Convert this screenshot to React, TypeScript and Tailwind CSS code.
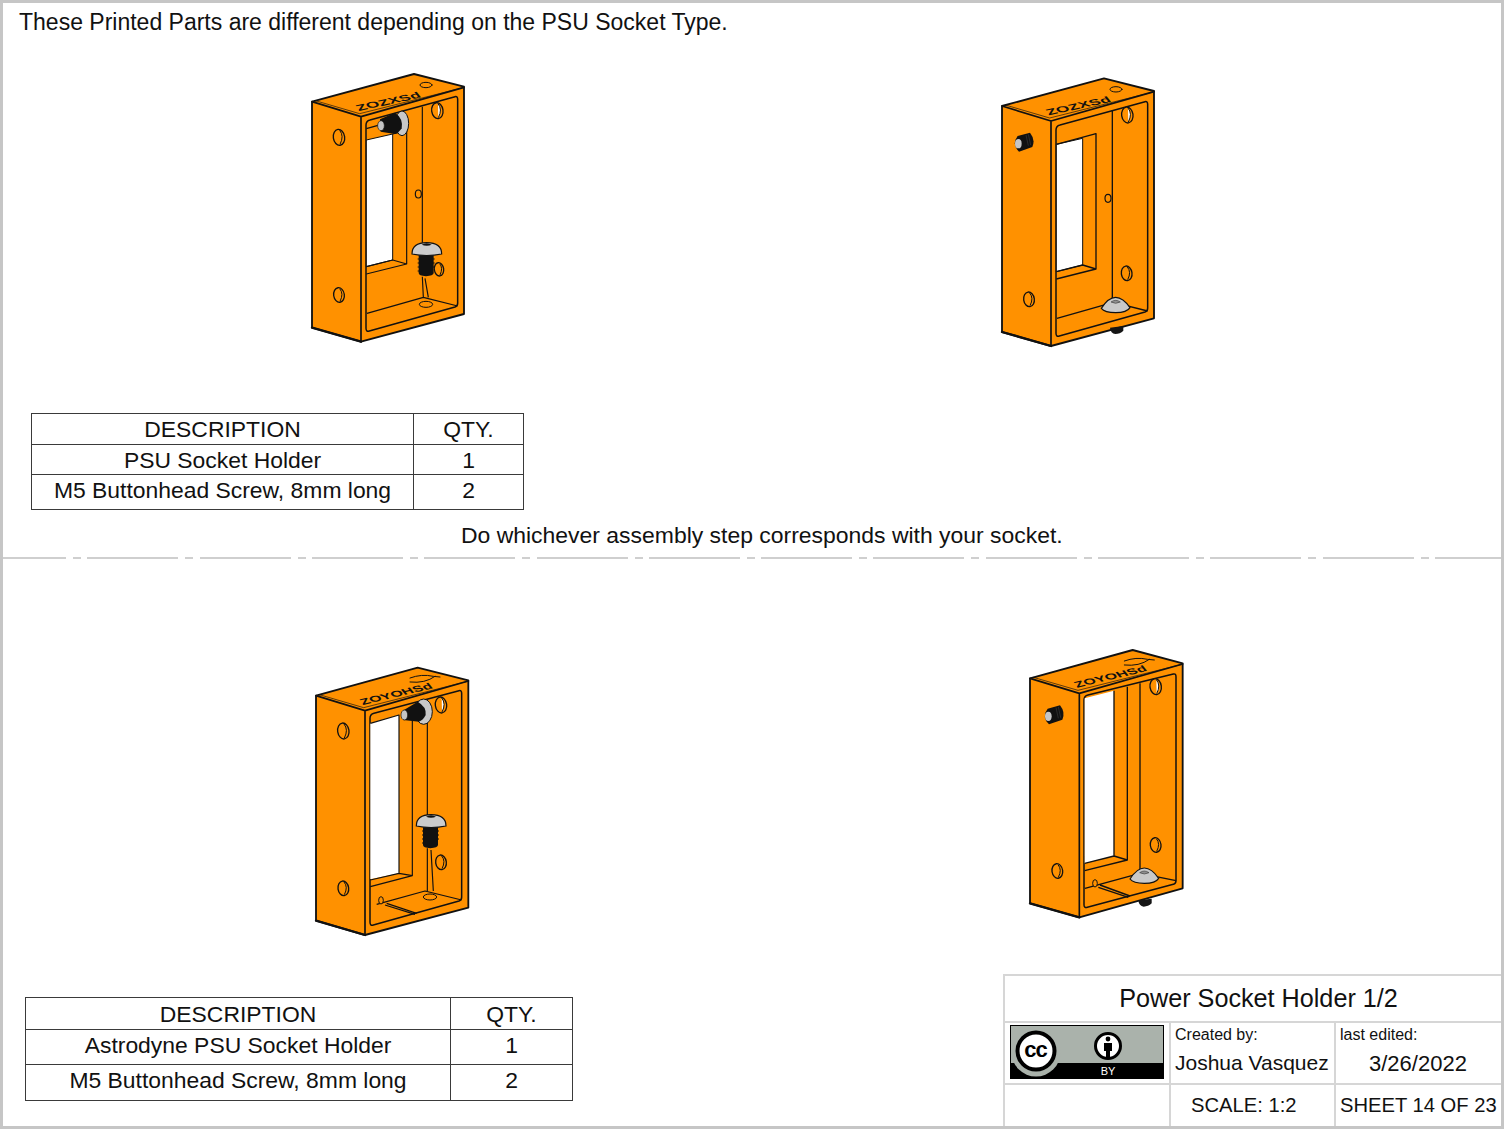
import React from "react";

const O = "#ff9100";

function Hole({ x, y, rx = 17, ry = 24, white = false }: { x: number; y: number; rx?: number; ry?: number; white?: boolean }) {
  return (
    <g>
      <ellipse cx={x} cy={y} rx={rx} ry={ry} fill={O} stroke="#111" strokeWidth={4} transform={`rotate(-8 ${x} ${y})`} />
      <path d={`M${x + 2},${y - ry + 3} Q${x + rx - 1},${y - 4} ${x + 3},${y + ry - 3}`} fill={white ? "#fff" : "none"} stroke="#111" strokeWidth={3} />
    </g>
  );
}

function Body({ pts, text, oval, frame }: { pts: number[]; text: string; oval: boolean; frame: string }) {
  const [ax, ay, bx, by, cx, cy, dx, dy, ex, ey, fx, fy] = pts;
  return (
    <g strokeLinejoin="round" strokeLinecap="round">
      <path d={`M${ax},${ay} L${bx},${by} L${cx},${cy} L${dx},${dy} L${ex},${ey} L${fx},${fy} Z`} fill={O} stroke="#111" strokeWidth={5.5} />
      <path d={`M${ax},${ay} L${ex},${ay + 45} L${ex},${ey} M${ex},${ay + 45} L${cx},${cy + 2}`} fill="none" stroke="#111" strokeWidth={5} />
      <path d={`M${ax + 10},${ay - 3} L${ex - 4},${ay + 36} L${cx - 6},${cy + 4}`} fill="none" stroke="#111" strokeWidth={2} />
      <path d={`M${fx},${fy} L${ex},${ey}`} fill="none" stroke="#111" strokeWidth={7} />
      <text
        transform={`matrix(${text.length > 6 ? 1.3 : 1.42},-0.31,0.55,0.68,${ex - 7},${ay + 28})`}
        fontFamily="'Liberation Sans', sans-serif"
        fontWeight={700}
        fontSize={34}
        fill="#111"
      >
        {text}
      </text>
      {oval ? (
        <ellipse cx={cx - 114} cy={cy - 5} rx={18} ry={8} fill="none" stroke="#111" strokeWidth={3} />
      ) : (
        <path d={`M${cx - 175},${cy - 7} Q${cx - 140},${cy - 20} ${cx - 105},${cy - 12} L${cx - 85},${cy - 10} M${cx - 175},${cy + 5} Q${cx - 130},${cy + 10} ${cx - 100},${cy - 12}`} fill="none" stroke="#111" strokeWidth={3} />
      )}
      <path d={frame} fill="none" stroke="#111" strokeWidth={4.5} />
    </g>
  );
}

function SideScrew({ x, y }: { x: number; y: number }) {
  return (
    <g transform={`translate(${x} ${y})`}>
      <path d="M-17,-19 L20,-29 Q37,-8 27,14 L-13,28 Q-36,6 -17,-19 Z" fill="#111" />
      <path d="M8,-22 L15,10 M15,-24 L22,8" stroke="#3a3a3a" strokeWidth={2} />
      <ellipse cx={-15} cy={4} rx={10} ry={14} fill="#c6c6c6" />
    </g>
  );
}

function Dome({ x, y }: { x: number; y: number }) {
  return (
    <g transform={`translate(${x} ${y})`}>
      <path d="M-43,5 Q-22,-28 0,-28 Q22,-28 43,3 Q34,18 0,18 Q-33,18 -43,5 Z" fill="#c9c9c9" stroke="#111" strokeWidth={3.5} />
      <path d="M-14,-14 Q0,-24 14,-14 Q0,-6 -14,-14 Z" fill="#8f8f8f" stroke="#222" strokeWidth={1.5} />
    </g>
  );
}

function Underside({ x, y }: { x: number; y: number }) {
  return <path transform={`translate(${x} ${y})`} d="M-20,-9 L20,-14 L20,0 Q10,10 -4,10 Q-18,9 -20,-9 Z" fill="#151515" />;
}

function ButtonScrew({ x, y }: { x: number; y: number }) {
  return (
    <g transform={`translate(${x} ${y})`}>
      <path d="M-24,34 L21,34 L21,90 Q20,98 -2,100 Q-24,98 -24,90 Z" fill="#111" />
      <path d="M-27,48 h5 M-27,60 h5 M-27,72 h5 M-27,84 h5 M19,48 h5 M19,60 h5 M19,72 h5" stroke="#111" strokeWidth={3} />
      <path d="M-44,33 Q-44,-1 0,-1 Q45,-1 45,33 Q0,42 -44,33 Z" fill="#cccccc" stroke="#111" strokeWidth={3.5} />
      <path d="M-15,5 Q0,-4 15,5 Q0,11 -15,5 Z" fill="#111" />
    </g>
  );
}

function Part({ children }: { children: React.ReactNode }) {
  return (
    <svg viewBox="0 0 600 870" className="w-[200px] h-[290px] shrink-0">
      {children}
    </svg>
  );
}

function Part1() {
  return (
    <Part>
      <Body
        pts={[66, 125, 372, 42, 522, 80, 522, 762, 213, 845, 66, 803]}
        text="ZOZXSd"
        oval
        frame="M228,195 Q228,183 240,180 L495,110 Q503,108 503,118 L503,730 Q503,738 495,741 L238,813 Q228,816 228,805 Z"
      />
      <path d="M229,240 L308,222 L308,600 L229,620 Z" fill="#fff" stroke="#111" strokeWidth={3} />
      <path d="M229,206 L350,172 L350,612 L229,642 M229,620 L308,600 L350,612 M308,222 L350,212 M231,760 L400,712 L503,738 M397,140 L397,548 M397,650 L400,712 M405,655 L415,712" fill="none" stroke="#111" strokeWidth={3.5} strokeLinejoin="round" />
      <Hole x={147} y={232} />
      <Hole x={147} y={705} rx={16} ry={22} />
      <Hole x={442} y={152} white />
      <Hole x={447} y={628} rx={14} ry={20} />
      <ellipse cx={385} cy={402} rx={9} ry={12} fill={O} stroke="#111" strokeWidth={3.5} />
      <ellipse cx={408} cy={733} rx={20} ry={9} fill={O} stroke="#111" strokeWidth={3} />
      <ellipse cx={336} cy={190} rx={20} ry={37} fill="#c8c8c8" stroke="#111" strokeWidth={3} />
      <path d="M270,178 L315,158 Q340,175 335,205 Q325,220 315,222 L272,215 Z" fill="#111" />
      <ellipse cx={273} cy={197} rx={10} ry={15} fill="#c4c4c4" stroke="#111" strokeWidth={2} />
      <ButtonScrew x={410} y={549} />
    </Part>
  );
}

function Part2() {
  return (
    <Part>
      <Body
        pts={[66, 123, 372, 40, 522, 78, 522, 760, 213, 843, 66, 801]}
        text="ZOZXSd"
        oval
        frame="M228,195 Q228,183 240,180 L495,110 Q503,108 503,118 L503,730 Q503,738 495,741 L238,813 Q228,816 228,805 Z"
      />
      <path d="M229,238 L308,220 L308,600 L229,620 Z" fill="#fff" stroke="#111" strokeWidth={3} />
      <path d="M229,238 L348,206 L348,612 L229,642 M229,620 L308,600 L348,612 M231,760 L400,712 L503,738 M397,135 L397,712" fill="none" stroke="#111" strokeWidth={4} strokeLinejoin="round" />
      <Hole x={147} y={703} rx={16} ry={22} />
      <Hole x={442} y={150} white />
      <Hole x={440} y={625} rx={16} ry={22} />
      <ellipse cx={384} cy={400} rx={9} ry={12} fill={O} stroke="#111" strokeWidth={3.5} />
      <SideScrew x={130} y={232} />
      <Dome x={407} y={725} />
      <Underside x={410} y={797} />
    </Part>
  );
}

function Part3() {
  return (
    <Part>
      <Body
        pts={[63, 122, 368, 38, 520, 76, 520, 758, 210, 840, 63, 797]}
        text="ZOYOHSd"
        oval={false}
        frame="M225,190 Q225,178 237,175 L492,107 Q500,105 500,115 L500,727 Q500,735 492,738 L235,810 Q225,813 225,802 Z"
      />
      <path d="M226,205 L312,180 L312,655 L229,672 L226,672 L226,190 Z" fill="#fff" />
      <path d="M226,205 L312,180 L312,655 L226,675 M226,695 L352,662 L352,165 M312,655 L352,662 M245,748 L390,708 L500,735 M275,745 L365,775 M270,750 L360,778 M397,195 L397,482 M397,580 L397,708 M408,585 L415,708" fill="none" stroke="#111" strokeWidth={3.5} strokeLinejoin="round" />
      <Hole x={145} y={228} />
      <Hole x={145} y={700} rx={16} ry={22} />
      <Hole x={438} y={150} white />
      <Hole x={438} y={622} rx={16} ry={22} />
      <ellipse cx={258} cy={736} rx={7} ry={11} fill={O} stroke="#111" strokeWidth={3} />
      <ellipse cx={405} cy={726} rx={20} ry={9} fill={O} stroke="#111" strokeWidth={3} />
      <ellipse cx={386} cy={170} rx={26} ry={38} fill="#c8c8c8" stroke="#111" strokeWidth={3} />
      <path d="M322,168 L368,140 Q395,155 392,180 Q385,195 372,200 L325,195 Z" fill="#111" />
      <ellipse cx={328} cy={180} rx={10} ry={15} fill="#c4c4c4" stroke="#111" strokeWidth={2} />
      <ButtonScrew x={408} y={480} />
    </Part>
  );
}

function Part4() {
  return (
    <Part>
      <Body
        pts={[60, 115, 368, 30, 518, 70, 518, 745, 208, 832, 60, 790]}
        text="ZOYOHSd"
        oval={false}
        frame="M222,180 Q222,168 234,165 L490,102 Q498,100 498,110 L498,722 Q498,730 490,733 L232,802 Q222,805 222,794 Z"
      />
      <path d="M224,175 L312,152 L312,648 L224,670 Z" fill="#fff" />
      <path d="M312,152 L312,648 L224,670 M224,692 L352,660 L352,140 M312,648 L352,660 M390,130 L390,700 L498,722 M225,745 L390,700 M270,735 L360,768 M265,742 L355,772" fill="none" stroke="#111" strokeWidth={4} strokeLinejoin="round" />
      <Hole x={142} y={693} rx={16} ry={22} />
      <Hole x={437} y={140} white />
      <Hole x={437} y={615} rx={16} ry={22} />
      <ellipse cx={255} cy={730} rx={7} ry={11} fill={O} stroke="#111" strokeWidth={3} />
      <SideScrew x={130} y={225} />
      <Dome x={403} y={712} />
      <Underside x={405} y={790} />
    </Part>
  );
}

function CcBadge() {
  return (
    <svg viewBox="0 0 154 54" className="w-[154px] h-[54px] block">
      <rect width="154" height="54" fill="#aab2ab" />
      <rect y="38" width="154" height="16" fill="#000" />
      <rect x="0.5" y="0.5" width="153" height="53" fill="none" stroke="#000" />
      <circle cx="26" cy="27" r="24.5" fill="#aab2ab" />
      <circle cx="26" cy="26" r="18.5" fill="#fff" stroke="#000" strokeWidth="4" />
      <text x="25.5" y="32" textAnchor="middle" fontFamily="'Liberation Sans', sans-serif" fontWeight={700} fontSize="22" letterSpacing="-1" fill="#000">cc</text>
      <circle cx="98" cy="21" r="12.5" fill="#fff" stroke="#000" strokeWidth="3" />
      <circle cx="98" cy="14" r="2.4" fill="#000" />
      <path d="M94,18 h8 v8 h-2 v7 h-4 v-7 h-2 Z" fill="#000" />
      <text x="98" y="50" textAnchor="middle" fontFamily="'Liberation Sans', sans-serif" fontSize="11" fill="#fff">BY</text>
    </svg>
  );
}

function Bom({ rows, className, qtyW, descW, heights, pads }: { rows: string[][]; className: string; qtyW: string; descW: string; heights: string[]; pads: string[] }) {
  return (
    <table className={`self-start border-collapse table-fixed text-[22.9px] leading-none text-[#111] ${className}`}>
      <tbody>
        {rows.map((r, i) => (
          <tr key={i} className={heights[i]}>
            <td className={`border border-[#3a3a3a] text-center ${descW} ${pads[i]}`}>{r[0]}</td>
            <td className={`border border-[#3a3a3a] text-center ${qtyW} ${pads[i]}`}>{r[1]}</td>
          </tr>
        ))}
      </tbody>
    </table>
  );
}

export default function App() {
  return (
    <div className="w-[1504px] h-[1129px] bg-white border-[3px] border-[#c6c6c6] font-['Liberation_Sans',Arial,sans-serif] text-[#111] overflow-hidden">
      <section className="h-[554px] flex flex-col">
        <p className="h-[38px] leading-[38px] pl-4 text-[23px] whitespace-nowrap">These Printed Parts are different depending on the PSU Socket Type.</p>
        <div className="flex items-start mt-[19px] ml-[287px] gap-[490px] h-[295px]">
          <Part1 />
          <div className="mt-[5px]">
            <Part2 />
          </div>
        </div>
        <Bom
          className="ml-[28px] mt-[58px]"
          descW="w-[382px]"
          qtyW="w-[110px]"
          heights={["h-[31px]", "h-[30px]", "h-[35px]"]}
          pads={["pt-[1px]", "pt-[1px]", "pb-[4px]"]}
          rows={[
            ["DESCRIPTION", "QTY."],
            ["PSU Socket Holder", "1"],
            ["M5 Buttonhead Screw, 8mm long", "2"],
          ]}
        />
        <p className="ml-[458px] mt-[11px] h-[28px] leading-[28px] text-[22.95px] whitespace-nowrap">Do whichever assembly step corresponds with your socket.</p>
      </section>
      <div className="h-[2px] bg-[repeating-linear-gradient(90deg,#cfcfcf_0,#cfcfcf_91px,#fff_91px,#fff_98px,#cfcfcf_98px,#cfcfcf_106px,#fff_106px,#fff_112.3px)] bg-[position:-28px_0]" />
      <section className="flex flex-col">
        <div className="flex items-start mt-[81px] ml-[292px] gap-[515px] h-[305px]">
          <div className="mt-[15px]">
            <Part3 />
          </div>
          <Part4 />
        </div>
        <div className="flex items-start mt-[29px] h-[152px]">
          <Bom
            className="ml-[22px] mt-[23px]"
            descW="w-[425px]"
            qtyW="w-[122px]"
            heights={["h-[32px]", "h-[35px]", "h-[36px]"]}
            pads={["pt-[2px]", "pb-[4px]", "pb-[4px]"]}
            rows={[
              ["DESCRIPTION", "QTY."],
              ["Astrodyne PSU Socket Holder", "1"],
              ["M5 Buttonhead Screw, 8mm long", "2"],
            ]}
          />
          <div className="ml-auto w-[498px] h-[152px] grid grid-cols-[166px_165px_167px] grid-rows-[47px_62px_43px] border-l-2 border-t-2 border-[#d6d6d6]">
            <div className="col-span-3 flex items-center justify-center pl-[9px] border-b-2 border-[#d6d6d6] text-[25.2px]">Power Socket Holder 1/2</div>
            <div className="pl-[5px] pt-[2px] border-r-2 border-b-2 border-[#d6d6d6]">
              <CcBadge />
            </div>
            <div className="pl-[4px] border-r-2 border-b-2 border-[#d6d6d6]">
              <div className="text-[16px] leading-[24px]">Created by:</div>
              <div className="text-[21px] leading-[30px] mt-[1px] whitespace-nowrap">Joshua Vasquez</div>
            </div>
            <div className="pl-[4px] border-b-2 border-[#d6d6d6]">
              <div className="text-[16px] leading-[24px]">last edited:</div>
              <div className="text-[22px] leading-[30px] mt-[2px] pl-[29px] whitespace-nowrap">3/26/2022</div>
            </div>
            <div className="border-r-2 border-[#d6d6d6]" />
            <div className="border-r-2 border-[#d6d6d6] pl-[20px] text-[20.2px] leading-[41px] whitespace-nowrap">SCALE: 1:2</div>
            <div className="pl-[4px] text-[20.2px] leading-[41px] whitespace-nowrap">SHEET 14 OF 23</div>
          </div>
        </div>
      </section>
    </div>
  );
}
